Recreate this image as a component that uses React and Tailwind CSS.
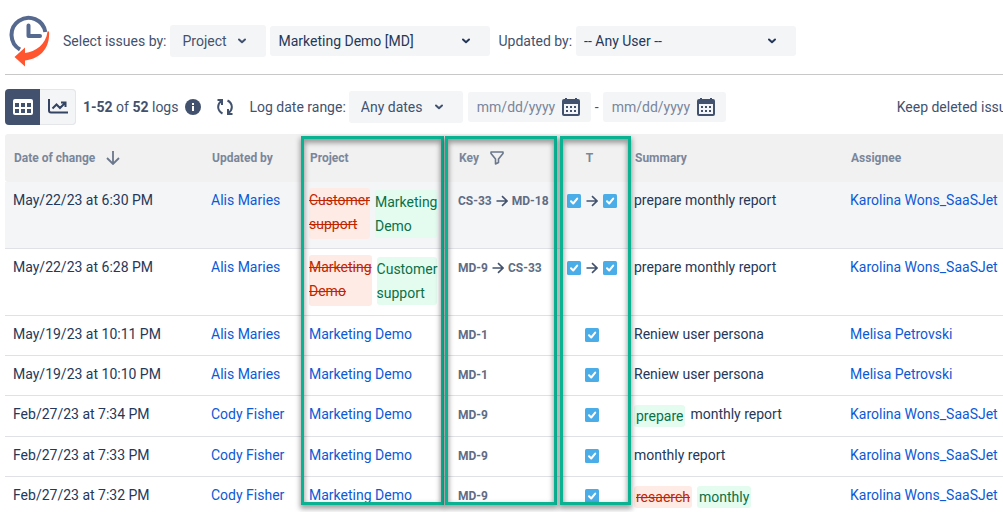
import clsx from 'clsx';

const logs = [
  { id: 1, date: 'May/22/23 at 6:30 PM', user: 'Alis Maries', oldProject: 'Customer support', project: 'Marketing Demo', oldKey: 'CS-33', key: 'MD-18', moved: true, summary: [{ text: 'prepare monthly report' }], assignee: 'Karolina Wons_SaaSJet' },
  { id: 2, date: 'May/22/23 at 6:28 PM', user: 'Alis Maries', oldProject: 'Marketing Demo', project: 'Customer support', oldKey: 'MD-9', key: 'CS-33', moved: true, summary: [{ text: 'prepare monthly report' }], assignee: 'Karolina Wons_SaaSJet' },
  { id: 3, date: 'May/19/23 at 10:11 PM', user: 'Alis Maries', project: 'Marketing Demo', key: 'MD-1', summary: [{ text: 'Reniew user persona' }], assignee: 'Melisa Petrovski' },
  { id: 4, date: 'May/19/23 at 10:10 PM', user: 'Alis Maries', project: 'Marketing Demo', key: 'MD-1', summary: [{ text: 'Reniew user persona' }], assignee: 'Melisa Petrovski' },
  { id: 5, date: 'Feb/27/23 at 7:34 PM', user: 'Cody Fisher', project: 'Marketing Demo', key: 'MD-9', summary: [{ text: 'prepare', type: 'added' }, { text: 'monthly report' }], assignee: 'Karolina Wons_SaaSJet' },
  { id: 6, date: 'Feb/27/23 at 7:33 PM', user: 'Cody Fisher', project: 'Marketing Demo', key: 'MD-9', summary: [{ text: 'monthly report' }], assignee: 'Karolina Wons_SaaSJet' },
  { id: 7, date: 'Feb/27/23 at 7:32 PM', user: 'Cody Fisher', project: 'Marketing Demo', key: 'MD-9', summary: [{ text: 'resaerch', type: 'removed' }, { text: 'monthly', type: 'added' }], assignee: 'Karolina Wons_SaaSJet' },
];

function Logo() {
  return (
    <svg width="42" height="52" viewBox="0 0 42 52" aria-label="Issue History" role="img">
      <path d="M11 34.500A17 17 0 1 1 36.300 17" fill="none" stroke="#56698f" strokeWidth="4" />
      <path d="M19.500 10.500v10.500h11.500" fill="none" stroke="#56698f" strokeWidth="4" strokeLinecap="round" strokeLinejoin="round" />
      <path d="M38.500 16.500h1.500c1.200 15.500-7.500 27-24 29v6L5.500 42l10.500-9.500v5.500C26.500 36.500 37 30 38.500 16.500z" fill="#ff5630" />
    </svg>
  );
}

function Chevron({ className }) {
  return (
    <svg className={className} width="10" height="6" viewBox="0 0 10 6" aria-hidden="true">
      <path d="M2 1.500 5 4.200l3-2.700" fill="none" stroke="currentColor" strokeWidth="2" strokeLinecap="round" strokeLinejoin="round" />
    </svg>
  );
}

function ArrowRight() {
  return (
    <svg width="12" height="12" viewBox="0 0 12 12" className="shrink-0 text-[#42526e]" aria-label="changed to" role="img">
      <path d="M.5 6h10.500M6 1.200 11 6 6 10.800" fill="none" stroke="currentColor" strokeWidth="1.600" />
    </svg>
  );
}

function TaskIcon() {
  return (
    <svg width="14" height="14" viewBox="0 0 14 14" className="shrink-0" aria-label="Task" role="img">
      <rect width="14" height="14" rx="1.500" fill="#4bade8" />
      <path d="M4 7.300 6.200 9.500 10.200 4.600" fill="none" stroke="#fff" strokeWidth="2" strokeLinecap="round" strokeLinejoin="round" />
    </svg>
  );
}

function CalendarIcon() {
  return (
    <svg width="18" height="18" viewBox="0 0 18 18" aria-hidden="true">
      <path fillRule="evenodd" d="M3 0h2v1h8V0h2v1h1a2 2 0 0 1 2 2V16a2 2 0 0 1-2 2H2a2 2 0 0 1-2-2V3a2 2 0 0 1 2-2h1zM2 6v10h14V6z" fill="#42526e" />
      <path d="M4 8h2v2H4zM8 8h2v2H8zM12 8h2v2h-2zM4 12h2v2H4zM8 12h2v2H8zM12 12h2v2h-2z" fill="#42526e" />
    </svg>
  );
}

function SelectBox({ id, label, value, className }) {
  return (
    <div className={clsx('relative shrink-0', className)}>
      <select id={id} aria-label={label} className="h-full w-full appearance-none rounded-[3px] bg-[#f4f5f7] outline-none">
        <option>{value}</option>
      </select>
      <Chevron className="pointer-events-none absolute top-1/2 right-[19px] -translate-y-1/2" />
    </div>
  );
}

function DateInput({ label }) {
  return (
    <div className="flex h-[30px] w-[123px] shrink-0 items-center rounded-[3px] bg-[#f4f5f7] pl-[9px]">
      <input type="text" aria-label={label} placeholder="mm/dd/yyyy" className="w-[85px] bg-transparent outline-none placeholder:text-[#7a869a]" />
      <button type="button" aria-label={`Pick ${label}`}><CalendarIcon /></button>
    </div>
  );
}

function ProjectChange({ from, to }) {
  return (
    <div className="flex items-start gap-[5px]">
      <span className="w-min rounded-[3px] bg-[#ffebe6] pb-[3px] text-[#bf2600] line-through">{from}</span>
      <span className="mt-[2px] w-min rounded-[3px] bg-[#e3fcef] text-[#0a7048]">{to}</span>
    </div>
  );
}

function SummaryPart({ type, children }) {
  if (!type) return <span>{children}</span>;
  return (
    <span
      className={clsx(
        'mt-[3px] rounded-[3px] px-[2px] leading-[22px]',
        type === 'removed' ? 'bg-[#ffebe6] text-[#bf2600] line-through' : 'bg-[#e3fcef] text-[#0a7048]',
      )}
    >
      {children}
    </span>
  );
}

function LogRow({ row }) {
  return (
    <tr className={clsx('border-b border-[#dfe1e6] align-top [&>td]:pt-[6px] [&>td]:pb-[9px] [&>td]:pl-2', row.id === 1 && 'bg-[#f4f5f7]')}>
      <td>{row.date}</td>
      <td><a href="#user" className="text-[#0c5ad6]">{row.user}</a></td>
      <td>
        {row.moved
          ? <ProjectChange from={row.oldProject} to={row.project} />
          : <a href="#project" className="text-[#0c5ad6]">{row.project}</a>}
      </td>
      <td className="text-xs font-bold text-[#5e6c84]">
        <div className="flex h-6 items-center gap-1 pt-px">
          {row.oldKey && <><span>{row.oldKey}</span><ArrowRight /></>}
          <span>{row.key}</span>
        </div>
      </td>
      <td>
        <div className="flex h-6 items-center justify-center gap-[5px] pt-[2px] pr-[6px]">
          {row.moved && <><TaskIcon /><ArrowRight /></>}
          <TaskIcon />
        </div>
      </td>
      <td>
        <div className="flex gap-[5px]">
          {row.summary.map((part) => <SummaryPart key={part.text} type={part.type}>{part.text}</SummaryPart>)}
        </div>
      </td>
      <td className="whitespace-nowrap"><a href="#assignee" className="text-[#0c5ad6]">{row.assignee}</a></td>
    </tr>
  );
}

export default function App() {
  const frame = 'pointer-events-none absolute top-[2px] h-[369px] border-[3px] border-[#0ab292] shadow-[0_3px_5px_1px_rgba(0,0,0,0.35),inset_0_3px_5px_1px_rgba(0,0,0,0.35)]';

  return (
    <div className="h-screen overflow-hidden bg-white pl-[5px] font-['Roboto',sans-serif] text-sm leading-6 text-[#253858]">
      <header className="flex h-[75px] items-center border-b border-[#c8c8c8] pt-[7px] pl-1 whitespace-nowrap text-[#42526e]">
        <Logo />
        <label htmlFor="source" className="ml-3">Select issues by:</label>
        <SelectBox id="source" value="Project" className="ml-1 h-8 w-24 [&>select]:pl-3" />
        <SelectBox id="project" label="Project" value="Marketing Demo [MD]" className="ml-1 h-[30px] w-[220px] text-[#253858] [&>select]:pl-2" />
        <label htmlFor="updated" className="ml-2">Updated by:</label>
        <SelectBox id="updated" value="-- Any User --" className="ml-1 h-[30px] w-[220px] text-[#253858] [&>select]:pl-2" />
      </header>

      <div className="flex h-[59px] items-center pt-1 whitespace-nowrap text-[#42526e]">
        <div className="flex h-9 w-[71px] shrink-0 rounded-[4px] bg-[#f4f5f7]">
          <button type="button" aria-label="Table view" className="flex w-[35px] shrink-0 items-center justify-center rounded-l-[4px] bg-[#42526e]">
            <svg width="20" height="16" viewBox="0 0 20 16">
              <rect width="20" height="16" rx="2" fill="#fff" />
              <path d="M2 4h4v4H2zM8 4h4v4H8zM14 4h4v4h-4zM2 10h4v4H2zM8 10h4v4H8zM14 10h4v4h-4z" fill="#42526e" />
            </svg>
          </button>
          <button type="button" aria-label="Chart view" className="flex flex-1 items-center justify-center rounded-r-[4px] border border-l-0 border-[#e4e6ea]">
            <svg width="20" height="15" viewBox="0 0 20 15" fill="none" stroke="#344563" strokeWidth="2">
              <path d="M1 0v11.500a2 2 0 0 0 2 2h17" />
              <path d="M4.500 9.500 8.500 5.500l3.500 3.500L17 4M13 3.500h4.500V8" />
            </svg>
          </button>
        </div>
        <span className="ml-[7px]"><b>1-52</b> of <b>52</b> logs</span>
        <button type="button" aria-label="Info" className="ml-[7px]">
          <svg width="16" height="16" viewBox="0 0 16 16">
            <circle cx="8" cy="8" r="8" fill="#42526e" />
            <path d="M7 7h2v5H7zM7 4h2v2H7z" fill="#fff" />
          </svg>
        </button>
        <button type="button" aria-label="Refresh" className="ml-4">
          <svg width="16" height="16" viewBox="0 0 16 16" fill="none" stroke="#42526e" strokeWidth="2">
            <path d="M5.500 14.500C-.2 11.500 0 5 4.500 2M.5 1H5v5" />
            <path d="M10.500 1.500c5.700 3 5.500 9.500 1 12.500M15.500 15H11v-5" />
          </svg>
        </button>
        <label htmlFor="range" className="ml-4">Log date range:</label>
        <SelectBox id="range" value="Any dates" className="ml-[3px] h-8 w-[114px] [&>select]:pl-3" />
        <div className="ml-[5px] flex items-center gap-1">
          <DateInput label="start date" />
          <span>-</span>
          <DateInput label="end date" />
        </div>
        <span className="ml-[171px]">Keep deleted issues</span>
      </div>

      <div className="relative">
        <table className="w-full table-fixed border-collapse">
          <thead>
            <tr className="h-12 bg-[#f1f1f1] text-left text-xs text-[#7a869a] [&>th]:pl-[9px] [&>th]:font-bold">
              <th className="w-[198px] rounded-l-[3px]">
                <span className="flex items-center gap-[11px]">
                  Date of change
                  <svg width="14" height="14" viewBox="0 0 14 14" fill="none" stroke="#6b778c" strokeWidth="1.800">
                    <path d="M7 0v12.500M1 7l6 6 6-6" />
                  </svg>
                </span>
              </th>
              <th className="w-[98px]">Updated by</th>
              <th className="w-[149px]">Project</th>
              <th className="w-[106px]">
                <span className="flex items-center gap-[11px]">
                  Key
                  <svg width="14" height="14" viewBox="0 0 14 14" fill="none" stroke="#6b778c" strokeWidth="1.600" strokeLinejoin="round">
                    <path d="M1 1h12v1.500L8.500 8v3.500l-3 1.500V8L1 2.500z" />
                  </svg>
                </span>
              </th>
              <th className="w-[70px]"><span className="block pr-3 text-center">T</span></th>
              <th className="w-[216px]">Summary</th>
              <th>Assignee</th>
            </tr>
          </thead>
          <tbody>
            {logs.map((row) => <LogRow key={row.id} row={row} />)}
          </tbody>
        </table>

        {/* highlighted columns */}
        <div className={clsx(frame, 'left-[296px] w-[143px]')} />
        <div className={clsx(frame, 'left-[440px] w-[112px]')} />
        <div className={clsx(frame, 'left-[555px] w-[71px]')} />
      </div>
    </div>
  );
}
